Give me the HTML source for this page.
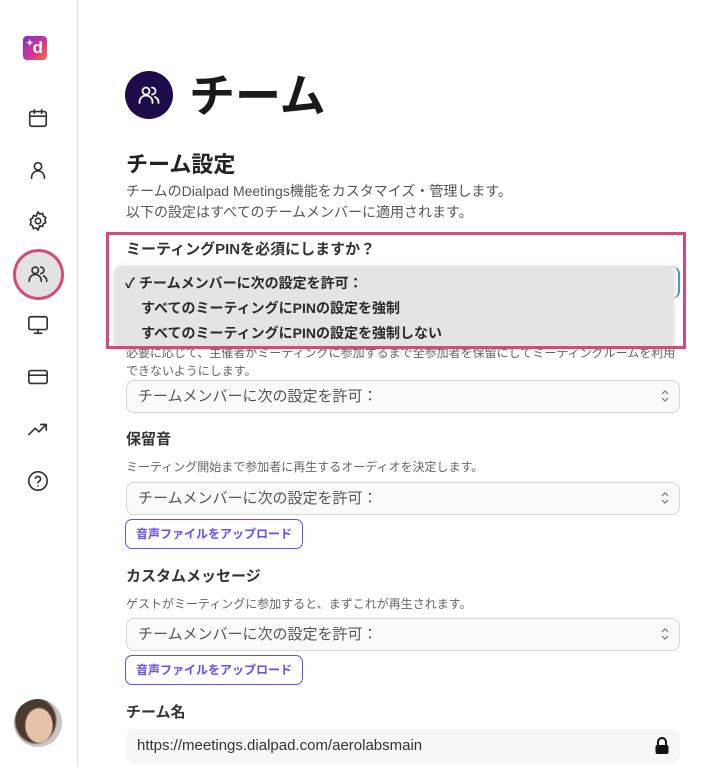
<!DOCTYPE html>
<html><head><meta charset="utf-8"><style>
*{margin:0;padding:0;box-sizing:border-box}
body{width:718px;height:767px;overflow:hidden;background:#fff;font-family:"Liberation Sans","Noto Sans CJK JP",sans-serif;color:#222;position:relative}
.abs{position:absolute}
.side{left:0;top:0;width:78px;height:767px;border-right:1px solid #ddd;background:#fff}
.ic{position:absolute;left:27px;width:22px;height:22px}
.ic svg{width:22px;height:22px;fill:none;stroke:#333;stroke-width:1.8;stroke-linecap:round;stroke-linejoin:round}
.t{position:absolute;white-space:nowrap}
.sel{position:absolute;left:126px;width:554px;height:33px;border:1px solid #d6d6d6;border-radius:8px;background:#fafafa;font-size:15px;color:#555;padding:6px 11px;line-height:20px}
.sel .ar{position:absolute;right:10px;top:8px;width:8px;height:14px}
.btn{position:absolute;left:125px;width:178px;height:30px;border:1px solid #6a4cf5;border-radius:7px;color:#6a4cf5;font-size:12px;font-weight:bold;text-align:center;line-height:28px}
.h{font-size:15px;font-weight:bold;color:#333}
.d{font-size:12px;color:#666}
</style></head><body>
<div class="abs side">
  <div class="abs" style="left:23px;top:36px;width:24px;height:24px;border-radius:4px;background:linear-gradient(135deg,#7b2fd0,#d8358a 60%,#f07a3a);color:#fff;font-weight:bold;font-size:17px;line-height:24px;text-align:right;padding-right:4px">d<span style="position:absolute;left:3px;top:-5px;font-size:9px">✦</span></div>
  <div class="ic" style="top:107px"><svg viewBox="0 0 24 24"><rect x="3" y="5" width="18" height="16" rx="2"/><path d="M3 10h18M8 3v4M16 3v4"/></svg></div>
  <div class="ic" style="top:159px"><svg viewBox="0 0 24 24"><circle cx="12" cy="8" r="4"/><path d="M5 21v-1a7 7 0 0 1 14 0v1"/></svg></div>
  <div class="ic" style="top:210px"><svg viewBox="0 0 24 24"><circle cx="12" cy="12" r="3"/><path d="M12 2l2 2.5 3-.8.8 3 2.7 1.3-1 2.9 1 2.9-2.7 1.3-.8 3-3-.8L12 22l-2-2.5-3 .8-.8-3L3.5 16l1-2.9-1-2.9 2.7-1.3.8-3 3 .8z"/></svg></div>
  <div class="abs" style="left:13px;top:249px;width:51px;height:51px;border-radius:50%;background:#e2e2e2;border:3px solid #d44a7a"></div>
  <div class="ic" style="top:263px"><svg viewBox="0 0 24 24"><circle cx="9" cy="8" r="3.5"/><path d="M2.5 20v-1a6.5 6.5 0 0 1 13 0v1M15 4.5a3.5 3.5 0 0 1 0 7M18 14a6 6 0 0 1 3.5 5.5v.5"/></svg></div>
  <div class="ic" style="top:314px"><svg viewBox="0 0 24 24"><rect x="2" y="3" width="20" height="14" rx="2"/><path d="M12 17v4M8 21h8"/></svg></div>
  <div class="ic" style="top:366px"><svg viewBox="0 0 24 24"><rect x="2" y="5" width="20" height="14" rx="2"/><path d="M2 10h20"/></svg></div>
  <div class="ic" style="top:419px"><svg viewBox="0 0 24 24"><path d="M2 17l7-7 4 4 8-8M15 6h6v6"/></svg></div>
  <div class="ic" style="top:470px"><svg viewBox="0 0 24 24"><circle cx="12" cy="12" r="10"/><path d="M9.1 9a3 3 0 0 1 5.8 1c0 2-3 2.5-3 4M12 17.5h.01"/></svg></div>
  <div class="abs" style="left:14px;top:699px;width:48px;height:48px;border-radius:50%;background:radial-gradient(ellipse 30% 38% at 52% 55%,#e6c3a8 0 90%,transparent 100%),radial-gradient(ellipse 45% 50% at 45% 45%,#4a3a30 0 90%,transparent 100%),#c8c6c2"></div>
</div>
<div class="abs" style="left:125px;top:71px;width:48px;height:48px;border-radius:50%;background:#1d0b4c"><svg viewBox="0 0 24 24" style="position:absolute;left:12px;top:12px;width:24px;height:24px;fill:none;stroke:#fff;stroke-width:1.8;stroke-linecap:round"><circle cx="9" cy="8" r="3.5"/><path d="M2.5 20v-1a6.5 6.5 0 0 1 13 0v1M15 4.5a3.5 3.5 0 0 1 0 7M18 14a6 6 0 0 1 3.5 5.5v.5"/></svg></div>
<div class="t" style="left:189px;top:66px;font-size:46px;font-weight:bold;color:#1a1a1a;line-height:60px">チーム</div>
<div class="t" style="left:126px;top:150px;font-size:22px;font-weight:bold;color:#222;line-height:30px">チーム設定</div>
<div class="t" style="left:126px;top:181px;font-size:14px;color:#555;line-height:21px">チームのDialpad Meetings機能をカスタマイズ・管理します。<br>以下の設定はすべてのチームメンバーに適用されます。</div>
<div class="t h" style="left:126px;top:240px;line-height:20px">ミーティングPINを必須にしますか？</div>
<div class="abs" style="left:126px;top:266px;width:554px;height:33px;border:1px solid #d6d6d6;border-right:2px solid #4a90e2;border-radius:8px;background:#fafafa"></div>
<div class="t d" style="left:126px;top:344px;line-height:18px;width:554px;overflow:hidden">必要に応じて、主催者がミーティングに参加するまで全参加者を保留にしてミーティングルームを利用<br>できないようにします。</div>
<div class="abs" style="left:115px;top:266px;width:558px;height:80px;background:#e4e4e4;border-radius:5px;box-shadow:0 2px 6px rgba(0,0,0,.2);font-size:14px;font-weight:bold;color:#2a2a2a;line-height:25px;padding-top:5px">
  <div style="padding-left:10px">✓ チームメンバーに次の設定を許可：</div>
  <div style="padding-left:26px">すべてのミーティングにPINの設定を強制</div>
  <div style="padding-left:26px">すべてのミーティングにPINの設定を強制しない</div>
</div>
<div class="abs" style="left:106px;top:232px;width:580px;height:117px;border:3px solid #d44a7a"></div>
<div class="sel" style="top:380px">チームメンバーに次の設定を許可：<svg class="ar" viewBox="0 0 8 14"><path d="M1 5l3-3 3 3M1 9l3 3 3-3" fill="none" stroke="#777" stroke-width="1.2"/></svg></div>
<div class="t h" style="left:126px;top:430px;line-height:20px">保留音</div>
<div class="t d" style="left:126px;top:458px;line-height:18px">ミーティング開始まで参加者に再生するオーディオを決定します。</div>
<div class="sel" style="top:482px">チームメンバーに次の設定を許可：<svg class="ar" viewBox="0 0 8 14"><path d="M1 5l3-3 3 3M1 9l3 3 3-3" fill="none" stroke="#777" stroke-width="1.2"/></svg></div>
<div class="btn" style="top:519px">音声ファイルをアップロード</div>
<div class="t h" style="left:126px;top:567px;line-height:20px">カスタムメッセージ</div>
<div class="t d" style="left:126px;top:595px;line-height:18px">ゲストがミーティングに参加すると、まずこれが再生されます。</div>
<div class="sel" style="top:618px">チームメンバーに次の設定を許可：<svg class="ar" viewBox="0 0 8 14"><path d="M1 5l3-3 3 3M1 9l3 3 3-3" fill="none" stroke="#777" stroke-width="1.2"/></svg></div>
<div class="btn" style="top:655px">音声ファイルをアップロード</div>
<div class="t h" style="left:126px;top:703px;line-height:20px">チーム名</div>
<div class="abs" style="left:126px;top:729px;width:554px;height:34px;border-radius:8px;background:#f6f6f6;font-size:15px;color:#333;padding:7px 11px;line-height:20px">https://meetings.dialpad.com/aerolabsmain
<svg viewBox="0 0 16 18" style="position:absolute;right:10px;top:8px;width:16px;height:18px"><path d="M4 8V5a4 4 0 0 1 8 0v3" fill="none" stroke="#111" stroke-width="2"/><rect x="1.5" y="8" width="13" height="9" rx="2" fill="#111"/></svg></div>
</body></html>
